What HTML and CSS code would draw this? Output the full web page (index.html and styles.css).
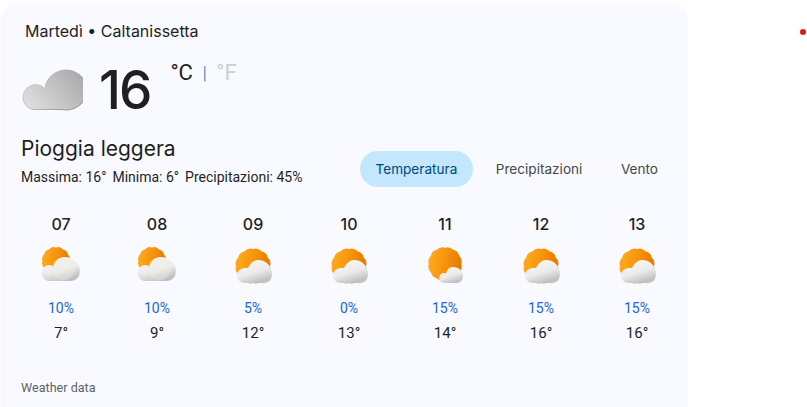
FILE: index.html
```html
<!DOCTYPE html>
<html lang="it">
<head>
    <meta charset="UTF-8">
    <meta name="viewport" content="width=device-width, initial-scale=1.0">
    <title>Meteo Caltanissetta</title>
    <link rel="stylesheet" href="styles.css">
</head>
<body>
    <svg class="defs" width="0" height="0">
        <defs>
            <linearGradient id="sunFill" x1="0" y1="0.1" x2="1" y2="0.3">
                <stop offset="0" stop-color="#ffae20"/>
                <stop offset="0.5" stop-color="#f8960e"/>
                <stop offset="1" stop-color="#e77a00"/>
            </linearGradient>
            <linearGradient id="cloudFill" x1="0.1" y1="0" x2="0.55" y2="1">
                <stop offset="0" stop-color="#fbf8f4"/>
                <stop offset="0.6" stop-color="#ecebea"/>
                <stop offset="1" stop-color="#bfc0c3"/>
            </linearGradient>
            <linearGradient id="greyFill" x1="0" y1="0.75" x2="1" y2="0.25">
                <stop offset="0" stop-color="#dedede"/>
                <stop offset="1" stop-color="#a9a9ab"/>
            </linearGradient>
            <linearGradient id="greyEdge" x1="0" y1="0" x2="1" y2="0.4">
                <stop offset="0" stop-color="#d4d4d4"/>
                <stop offset="1" stop-color="#949497"/>
            </linearGradient>
            <path id="sun" fill="url(#sunFill)" d="M17 0A8 8 0 0 1 14.72 8.5A8 8 0 0 1 8.5 14.72A8 8 0 0 1 0 17A8 8 0 0 1 -8.5 14.72A8 8 0 0 1 -14.72 8.5A8 8 0 0 1 -17 0A8 8 0 0 1 -14.72 -8.5A8 8 0 0 1 -8.5 -14.72A8 8 0 0 1 0 -17A8 8 0 0 1 8.5 -14.72A8 8 0 0 1 14.72 -8.5A8 8 0 0 1 17 0Z"/>
            <symbol id="iconSmallSun" viewBox="0 0 48 48">
                <use href="#sun" transform="translate(19 20) scale(.8)"/>
                <path fill="url(#cloudFill)" d="M12 40A7.5 8 0 0 1 12 24A6.5 6.5 0 0 1 16.5 25.5C18 20 22 16 27 16C36 16 43 22 43 30C43 36 39 40 34 40Z"/>
                <circle cx="26" cy="28" r="11.5" fill="#f3eee8" opacity=".35"/>
            </symbol>
            <symbol id="iconMidSun" viewBox="0 0 48 48">
                <use href="#sun" transform="translate(24 25)"/>
                <path fill="url(#cloudFill)" d="M15.5 42A7.5 7.5 0 0 1 15.5 27A6 6 0 0 1 19 27C21 22 25 19 29 19C37 19 43 25 43 33C43 38 40 42 35 42Z"/>
            </symbol>
            <symbol id="iconBigSun" viewBox="0 0 48 48">
                <use href="#sun" transform="translate(24 23) scale(.96)"/>
                <path fill="url(#cloudFill)" d="M23 42A5 5 0 0 1 23 32A3 3 0 0 1 25 32.5C26 28 29 26 32 26C38 26 42 30 42 35C42 39 39 42 36 42Z"/>
            </symbol>
        </defs>
    </svg>

    <main class="card">
        <div class="place">Martedì • Caltanissetta</div>

        <div class="now">
            <svg class="now-icon" width="64" height="42" viewBox="0 0 64 42">
                <path fill="url(#greyFill)" stroke="url(#greyEdge)" stroke-width="1" d="M14 40.5A12.5 12.5 0 0 1 14 16A13 13 0 0 1 26 20A21 20 0 1 1 42 40.5Z"/>
            </svg>
            <span class="now-temp">16</span>
            <div class="units"><span>°C</span> <span class="sep">|</span> <span class="off">°F</span></div>
        </div>

        <div class="summary">
            <div>
                <div class="condition">Pioggia leggera</div>
                <div class="details">
                    <span>Massima: 16°</span>
                    <span>Minima: 6°</span>
                    <span>Precipitazioni: 45%</span>
                </div>
            </div>
            <div class="tabs">
                <span class="tab active">Temperatura</span>
                <span class="tab">Precipitazioni</span>
                <span class="tab">Vento</span>
            </div>
        </div>

        <div class="hours">
            <div class="hour">
                <div class="hour-name">07</div>
                <svg class="hour-icon"><use href="#iconSmallSun"/></svg>
                <div class="hour-rain">10%</div>
                <div class="hour-temp">7°</div>
            </div>
            <div class="hour">
                <div class="hour-name">08</div>
                <svg class="hour-icon"><use href="#iconSmallSun"/></svg>
                <div class="hour-rain">10%</div>
                <div class="hour-temp">9°</div>
            </div>
            <div class="hour">
                <div class="hour-name">09</div>
                <svg class="hour-icon"><use href="#iconMidSun"/></svg>
                <div class="hour-rain">5%</div>
                <div class="hour-temp">12°</div>
            </div>
            <div class="hour">
                <div class="hour-name">10</div>
                <svg class="hour-icon"><use href="#iconMidSun"/></svg>
                <div class="hour-rain">0%</div>
                <div class="hour-temp">13°</div>
            </div>
            <div class="hour">
                <div class="hour-name">11</div>
                <svg class="hour-icon"><use href="#iconBigSun"/></svg>
                <div class="hour-rain">15%</div>
                <div class="hour-temp">14°</div>
            </div>
            <div class="hour">
                <div class="hour-name">12</div>
                <svg class="hour-icon"><use href="#iconMidSun"/></svg>
                <div class="hour-rain">15%</div>
                <div class="hour-temp">16°</div>
            </div>
            <div class="hour">
                <div class="hour-name">13</div>
                <svg class="hour-icon"><use href="#iconMidSun"/></svg>
                <div class="hour-rain">15%</div>
                <div class="hour-temp">16°</div>
            </div>
        </div>

        <div class="source">Weather data</div>
    </main>

    <span class="red-dot"></span>
</body>
</html>
```

FILE: styles.css
```css
html, body { margin: 0; padding: 0; height: 407px; overflow: hidden; background-color: #ffffff; }
body { font-family: Roboto, Arial, sans-serif; color: #1f1f1f; }
.defs { position: absolute; }
.card { box-sizing: border-box; width: 687px; height: 404px; margin: 3px 0 0 1px; padding: 18px 12px 0; background-color: #f8faff; border-radius: 16px 16px 0 0; }
.place { margin-left: 12px; font-family: Inter, Arial, sans-serif; font-size: 16px; font-weight: 400; line-height: 20px; }
.now { display: flex; align-items: flex-start; margin-top: 14px; height: 68px; }
.now-icon { margin: 14px 0 0 6px; }
.now-temp { margin-left: 16px; font-family: Inter, Arial, sans-serif; font-size: 53px; font-weight: 500; letter-spacing: -2px; line-height: 70px; }
.units { margin: 2px 0 0 20px; font-size: 22px; line-height: 32px; }
.units .sep { color: #5b9bb5; font-size: 18px; margin: 0 4px; vertical-align: 1px; }
.units .off { color: #c4d0d3; }
.summary { display: flex; justify-content: space-between; align-items: flex-end; margin-top: 12px; padding: 0 2px 0 8px; }
.condition { font-family: Inter, Arial, sans-serif; font-size: 21px; line-height: 28px; }
.details { display: flex; gap: 6px; margin-top: 4px; font-size: 14px; line-height: 20px; }
.tabs { display: flex; align-items: center; gap: 6.5px; font-family: Inter, Arial, sans-serif; font-size: 13.6px; color: #444746; }
.tab { padding: 0 16px; line-height: 36px; border-radius: 18px; }
.tab.active { background-color: #c2e7ff; color: #004a77; }
.hours { display: grid; grid-template-columns: repeat(7, 96px); margin-top: 27px; text-align: center; }
.hour-name { font-family: Inter, Arial, sans-serif; font-size: 16px; font-weight: 500; line-height: 20px; }
.hour-icon { display: block; width: 48px; height: 48px; margin: 7px auto 0; }
.hour-rain { margin-top: 9px; font-size: 14px; line-height: 20px; color: #1a65d6; }
.hour-temp { margin-top: 5px; font-size: 15px; line-height: 20px; }
.source { margin: 37px 0 0 8px; font-size: 12.6px; line-height: 16px; color: #5f6368; }
.red-dot { position: absolute; top: 29px; left: 800px; width: 6px; height: 6px; border-radius: 50%; background-color: #e8141c; }
```
